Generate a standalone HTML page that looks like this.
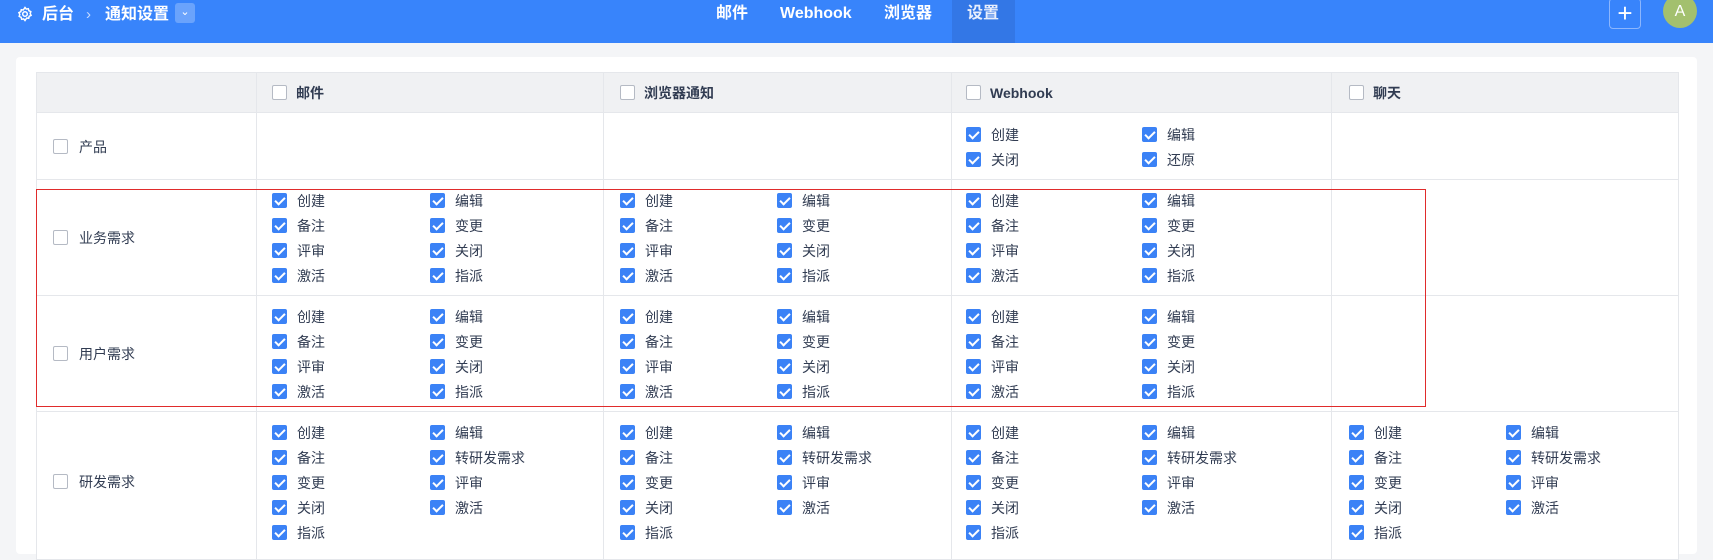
<!DOCTYPE html>
<html><head><meta charset="utf-8"><style>
*{margin:0;padding:0;box-sizing:border-box}
body{width:1713px;height:554px;overflow:hidden;background:#f4f5f7;font-family:"Liberation Sans","Noto Sans CJK SC",sans-serif;font-size:14px;color:#313c52;position:relative}
.hdr{position:absolute;left:0;top:0;width:1713px;height:43px;background:#3884fb;color:#fff}
.a{position:absolute}
.card{position:absolute;left:16px;top:57px;width:1681px;height:497px;background:#fff;border-radius:4px}
.cell{position:absolute;border-right:1px solid #e5e7eb;border-bottom:1px solid #e5e7eb}
.cb{position:absolute;width:15px;height:15px;border-radius:2px}
.on{background:#3b82f6}
.on::after{content:"";position:absolute;left:5px;top:2px;width:4px;height:8px;border:solid #fff;border-width:0 2px 2px 0;transform:rotate(45deg)}
.off{border:1px solid #b5bac4;background:#fff}
.it{position:absolute;height:20px;line-height:20px;white-space:nowrap}
.it .cb{left:0;top:2px}
.it span{position:absolute;left:25px;top:0}
</style></head><body>
<div class="hdr">
 <svg class="a" style="left:17px;top:6px" width="16" height="16" viewBox="0 0 16 16" fill="none" stroke="#fff" stroke-width="1.5"><circle cx="8" cy="8" r="2.3"/><path d="M8 1.5l1.3 1.6 2-.4.6 2 1.9.9-.6 2 .9 1.8-1.9.9-.5 2-2-.3L8 14.5 6.7 12.9l-2 .4-.6-2-1.9-.9.6-2-.9-1.8 1.9-.9.5-2 2 .3z"/></svg>
 <div class="a" style="left:42px;top:3px;font-size:16px;font-weight:bold;line-height:24px">后台</div>
 <div class="a" style="left:86px;top:3px;font-size:15px;line-height:24px;color:#c7dbff">›</div>
 <div class="a" style="left:105px;top:3px;font-size:16px;font-weight:bold;line-height:24px">通知设置</div>
 <div class="a" style="left:175px;top:3px;width:20px;height:20px;background:#6aa3fc;border-radius:3px;text-align:center;line-height:18px;font-size:11px">⌄</div>
 <div class="a" style="left:952px;top:0;width:63px;height:43px;background:#3377e6"></div>
 <div class="a" style="left:716px;top:2px;font-size:16px;font-weight:bold;line-height:24px">邮件</div>
 <div class="a" style="left:780px;top:2px;font-size:16px;font-weight:bold;line-height:24px">Webhook</div>
 <div class="a" style="left:884px;top:2px;font-size:16px;font-weight:bold;line-height:24px">浏览器</div>
 <div class="a" style="left:967px;top:2px;font-size:16px;font-weight:bold;line-height:24px;color:#e8eefc">设置</div>
 <div class="a" style="left:1609px;top:-2px;width:32px;height:31px;border:1px solid #8cb6fd;border-radius:4px;text-align:center;line-height:28px;font-size:26px">+</div>
 <div class="a" style="left:1663px;top:-6px;width:34px;height:34px;border-radius:50%;background:#a3c06e;text-align:center;line-height:36px;font-size:16px">A</div>
</div>
<div class="card"></div>
<div id="t"></div>
<div class="a" style="left:36px;top:189px;width:1390px;height:218px;border:1.5px solid #e02b2b"></div>
<script>
var cols=[37,257,604,952,1332,1679];
var rows=[73,113,180,296,412,560];
var h='';
for(var r=0;r<5;r++)for(var c=0;c<5;c++){
 var bg=r==0?'#f0f1f3':'#fff';
 h+='<div class="cell" style="left:'+cols[c]+'px;top:'+rows[r]+'px;width:'+(cols[c+1]-cols[c]+(c==0?1:0))+'px;height:'+(rows[r+1]-rows[r]+(r==0?1:0))+'px;background:'+bg+';'+(c==0?'border-left:1px solid #e5e7eb;left:'+(cols[c]-1)+'px;':'')+(r==0?'border-top:1px solid #e5e7eb;top:'+(rows[r]-1)+'px;':'')+'"></div>';
}
function it(x,y,t,on){return '<div class="it" style="left:'+x+'px;top:'+(y-10)+'px"><div class="cb '+(on?'on':'off')+'"></div><span>'+t+'</span></div>';}
var hx=[272,620,966,1349],ht=['邮件','浏览器通知','Webhook','聊天'];
for(var i=0;i<4;i++)h+='<div class="it" style="left:'+hx[i]+'px;top:83px;font-weight:bold"><div class="cb off"></div><span style="left:24px">'+ht[i]+'</span></div>';
var rt=[['产品',147],['业务需求',238],['用户需求',354],['研发需求',482]];
rt.forEach(function(a){h+='<div class="it" style="left:53px;top:'+(a[1]-10)+'px"><div class="cb off"></div><span style="left:26px">'+a[0]+'</span></div>';});
var sx=[[272,430],[620,777],[966,1142],[1349,1506]];
function grid(ci,y0,labels){for(var k=0;k<labels.length;k++){h+=it(sx[ci][k%2],y0+Math.floor(k/2)*25,labels[k],1);}}
grid(2,135,['创建','编辑','关闭','还原']);
var L=['创建','编辑','备注','变更','评审','关闭','激活','指派'];
for(var c2=0;c2<3;c2++){grid(c2,201,L);grid(c2,317,L);}
var L4=['创建','编辑','备注','转研发需求','变更','评审','关闭','激活','指派'];
for(var c3=0;c3<4;c3++)grid(c3,433,L4);
document.getElementById('t').innerHTML=h;
</script>
</body></html>
